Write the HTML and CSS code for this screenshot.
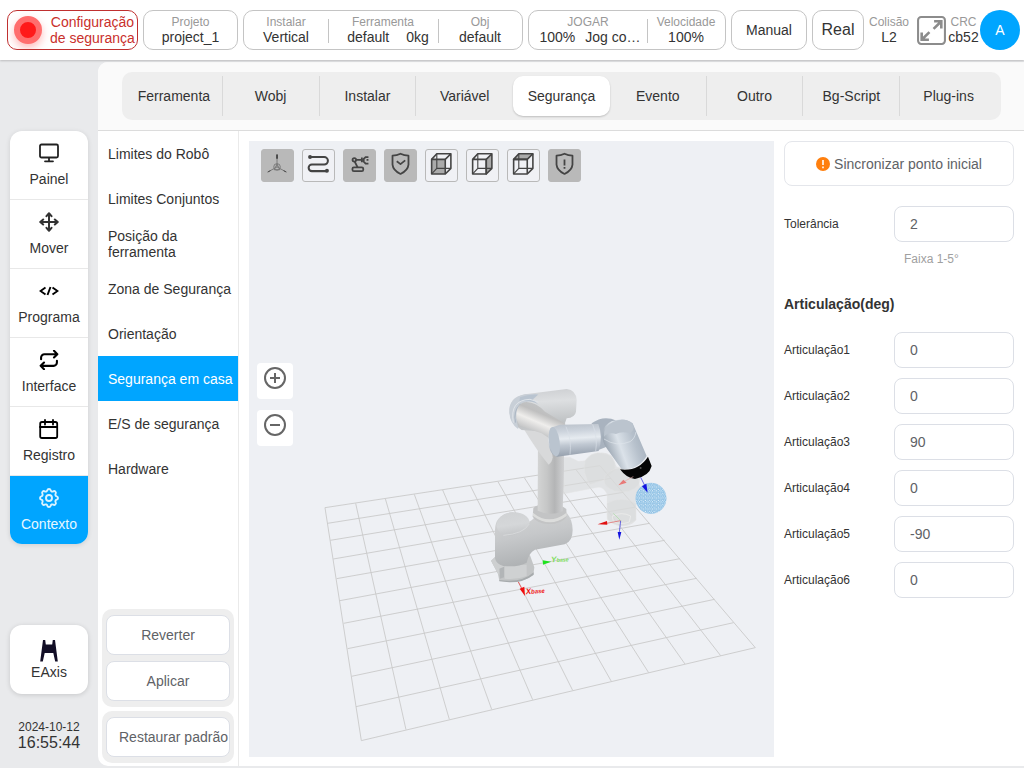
FILE: index.html
```
<!DOCTYPE html>
<html lang="pt">
<head>
    <meta charset="UTF-8">
    <meta name="viewport" content="width=device-width, initial-scale=1.0">
    <title>Segurança em casa</title>
    <link rel="stylesheet" href="styles.css">
</head>
<body>
    <!-- Header -->
    <header>
        <button class="box safety">
            <span class="lamp"></span>
            <span>Configuração<br>de segurança</span>
        </button>
        <div class="box project">
            <div class="cell"><span class="label">Projeto</span><span>project_1</span></div>
        </div>
        <div class="box setup">
            <div class="cell"><span class="label">Instalar</span><span>Vertical</span></div>
            <div class="cell tool"><span class="label">Ferramenta</span><span class="values"><span>default</span><span>0kg</span></span></div>
            <div class="cell"><span class="label">Obj</span><span>default</span></div>
        </div>
        <div class="box jog">
            <div class="cell mode"><span class="label">JOGAR</span><span class="values"><span>100%</span><span>Jog co…</span></span></div>
            <div class="cell"><span class="label">Velocidade</span><span>100%</span></div>
        </div>
        <button class="box manual">Manual</button>
        <button class="box real">Real</button>
        <div class="status">
            <div class="cell collision"><span class="label">Colisão</span><span>L2</span></div>
            <button class="fullscreen" aria-label="Tela cheia">
                <svg viewBox="0 0 30 30" fill="none" stroke="#8c8c8c" stroke-width="2">
                    <rect x="2" y="2" width="26" height="26" rx="3"/>
                    <path d="M17.5 6h7v7M24 6.500l-7 7M12.500 24h-7v-7M6 23.500l7-7" stroke-width="2.500"/>
                </svg>
            </button>
            <div class="cell"><span class="label">CRC</span><span>cb52</span></div>
            <button class="avatar">A</button>
        </div>
    </header>

    <div class="main">
        <!-- Sidebar -->
        <aside>
            <nav class="side-nav">
                <a href="#">
                    <svg viewBox="0 0 20 20" fill="none" stroke="#222" stroke-width="1.800" stroke-linecap="round">
                        <rect x="1" y="1.500" width="18" height="13" rx="1.500"/><path d="M10 15v3M6 18.300h8"/>
                    </svg>
                    Painel
                </a>
                <a href="#">
                    <svg viewBox="0 0 24 24" fill="none" stroke="#333" stroke-width="2.400" stroke-linecap="round" stroke-linejoin="round">
                        <path d="M5 9l-3.500 3L5 15M9 5l3-3.500L15 5M15 19l-3 3.500L9 19M19 9l3.500 3L19 15M2 12h20M12 2v20"/>
                    </svg>
                    Mover
                </a>
                <a href="#">
                    <svg viewBox="0 0 20 20" fill="none" stroke="#000" stroke-width="1.900">
                        <path d="M6.500 6.500L1.500 10l5 3.500M13.500 6.500l5 3.500-5 3.500M11.500 6l-3 8"/>
                    </svg>
                    Programa
                </a>
                <a href="#">
                    <svg viewBox="0 0 24 24" fill="none" stroke="#000" stroke-width="2.500" stroke-linecap="round" stroke-linejoin="round">
                        <path d="M18 1l4 4-4 4M2.500 11V9a4 4 0 0 1 4-4H21M6 23l-4-4 4-4M21.500 13v2a4 4 0 0 1-4 4H3"/>
                    </svg>
                    Interface
                </a>
                <a href="#">
                    <svg viewBox="0 0 20 20" fill="none" stroke="#000" stroke-width="1.800" stroke-linecap="round">
                        <rect x="1.200" y="3" width="17" height="16" rx="1.800"/><path d="M1 8h17M6 1v4.500M14 1v4.500"/>
                    </svg>
                    Registro
                </a>
                <a href="#" class="active">
                    <svg viewBox="2 2 20 20" fill="none" stroke="#d9f3ff" stroke-width="1.900">
                        <path d="M10.325 4.317c.426-1.756 2.924-1.756 3.350 0a1.724 1.724 0 0 0 2.573 1.066c1.543-.94 3.310.826 2.370 2.370a1.724 1.724 0 0 0 1.065 2.572c1.756.426 1.756 2.924 0 3.350a1.724 1.724 0 0 0-1.066 2.573c.94 1.543-.826 3.310-2.370 2.370a1.724 1.724 0 0 0-2.572 1.065c-.426 1.756-2.924 1.756-3.350 0a1.724 1.724 0 0 0-2.573-1.066c-1.543.94-3.310-.826-2.370-2.370a1.724 1.724 0 0 0-1.065-2.572c-1.756-.426-1.756-2.924 0-3.350a1.724 1.724 0 0 0 1.066-2.573c-.94-1.543.826-3.310 2.370-2.370 1 .608 2.296.07 2.572-1.065z"/>
                        <circle cx="12" cy="12" r="3"/>
                    </svg>
                    Contexto
                </a>
            </nav>
            <div class="side-bottom">
                <button class="eaxis">
                    <svg viewBox="0 0 18 22" fill="#120e26">
                        <path d="M3 0h2.200l.6 4.500h6.400L12.800 0H15l2.800 21.500h-2.600L13.300 13H4.700L2.800 21.500H.2z"/>
                    </svg>
                    EAxis
                </button>
                <div class="clock">
                    <div class="date">2024-10-12</div>
                    <div class="time">16:55:44</div>
                </div>
            </div>
        </aside>

        <section class="panel">
            <!-- Tabs -->
            <div class="tabs-wrap">
                <nav class="tabs">
                    <a href="#">Ferramenta</a>
                    <a href="#">Wobj</a>
                    <a href="#">Instalar</a>
                    <a href="#">Variável</a>
                    <a href="#" class="active">Segurança</a>
                    <a href="#">Evento</a>
                    <a href="#">Outro</a>
                    <a href="#">Bg-Script</a>
                    <a href="#">Plug-ins</a>
                </nav>
            </div>

            <div class="content">
                <!-- Submenu -->
                <div class="submenu">
                    <nav>
                        <a href="#">Limites do Robô</a>
                        <a href="#">Limites Conjuntos</a>
                        <a href="#">Posição da ferramenta</a>
                        <a href="#">Zona de Segurança</a>
                        <a href="#">Orientação</a>
                        <a href="#" class="active">Segurança em casa</a>
                        <a href="#">E/S de segurança</a>
                        <a href="#">Hardware</a>
                    </nav>
                    <div class="actions">
                        <div class="action-group">
                            <button>Reverter</button>
                            <button>Aplicar</button>
                        </div>
                        <div class="action-group">
                            <button class="restore">Restaurar padrão</button>
                        </div>
                    </div>
                </div>

                <!-- 3D view -->
                <div class="viewer">
                    <svg class="scene" viewBox="0 0 525 616">
                        <defs>
                            <linearGradient id="tube" x1="0" y1="0" x2="0.1" y2="1">
                                <stop offset="0" stop-color="#b9c0c9"/><stop offset=".25" stop-color="#ccd3dc"/>
                                <stop offset=".48" stop-color="#e6ebf0"/><stop offset=".68" stop-color="#c0c8d2"/><stop offset="1" stop-color="#98a2af"/>
                            </linearGradient>
                            <linearGradient id="wrist" x1="0" y1=".4" x2="1" y2="0">
                                <stop offset="0" stop-color="#9aa5b1"/><stop offset=".3" stop-color="#dbe2e9"/>
                                <stop offset=".6" stop-color="#b7c1cc"/><stop offset="1" stop-color="#98a4b2"/>
                            </linearGradient>
                            <linearGradient id="column" x1="0" y1="0" x2="1" y2="0">
                                <stop offset="0" stop-color="#d3d4d4"/><stop offset=".35" stop-color="#c6c7c7"/>
                                <stop offset=".65" stop-color="#b4b5b6"/><stop offset="1" stop-color="#d0d1d3"/>
                            </linearGradient>
                            <linearGradient id="shell" x1="0" y1="0" x2=".3" y2="1">
                                <stop offset="0" stop-color="#d4d5d6"/><stop offset=".5" stop-color="#c6c8ca"/><stop offset="1" stop-color="#aeb1b3"/>
                            </linearGradient>
                            <linearGradient id="cap" x1="0" y1="0" x2=".2" y2="1">
                                <stop offset="0" stop-color="#d0d2d4"/><stop offset=".6" stop-color="#d5d7d9"/><stop offset="1" stop-color="#c5c7c9"/>
                            </linearGradient>
                            <linearGradient id="elbow" x1=".4" y1="0" x2=".5" y2="1">
                                <stop offset="0" stop-color="#cdcfd2"/><stop offset=".3" stop-color="#dddfe1"/><stop offset=".8" stop-color="#bfc2c4"/><stop offset="1" stop-color="#c8cacc"/>
                            </linearGradient>
                            <linearGradient id="arm" gradientUnits="userSpaceOnUse" x1="212" y1="95" x2="176" y2="180">
                                <stop offset="0" stop-color="#c2c5c7"/><stop offset=".35" stop-color="#bfbfbf"/>
                                <stop offset=".65" stop-color="#efeeec"/><stop offset="1" stop-color="#c3c4c5"/>
                            </linearGradient>
                            <pattern id="mesh" width="13" height="11" patternUnits="userSpaceOnUse">
                                <rect width="13" height="11" fill="#8dc0e4"/>
                                <path d="M1 1l3 1-1 2-2-1zM6 0l3 1-2 2zM4 6l3-1 1 3-3 0zM10 4l3 1-2 3zM0 8l2 0 1 3-3-1zM8 8l3 1-2 2zM10 0h2v2z" fill="#f0f9ff"/>
                            </pattern>
                        </defs>

                        <!-- Floor grid -->
                        <g transform="translate(61 319) scale(.3333)" fill="none" stroke="#c9c9ca" stroke-width="2.700">
                            <path d="M45 143L154 842M137 130L288 809M226 116L418 778M313 103L545 748M398 90L668 719M481 77L788 691M564 65L904 664M643 53L1016 638M722 41L1125 612M798 29L1232 587M870 17L1336 563"/>
                            <path d="M45 143L870 17M53 190L903 55M61 241L940 97M70 297L978 141M80 356L1019 190M90 422L1064 241M101 490L1110 296M113 566L1160 355M125 649L1214 418M138 740L1271 488M154 842L1336 563"/>
                        </g>

                        <!-- Robot -->
                        <g transform="translate(221 229) scale(.3333)">
                            <!-- home position ghost -->
                            <g fill="#d9dadb" fill-opacity=".6" stroke="#e6e7e8" stroke-width="1">
                                <path d="M240 285L262 262H300L325 274L345 272L365 255Q400 240 425 258L440 290L500 310L510 350Q508 370 497 380L498 450Q485 468 455 468Q425 465 412 448L411 372Q400 350 385 352L280 372Q255 366 240 330Z"/>
                                <path d="M240 290Q262 280 278 310Q290 345 278 371Q250 366 240 330Z"/>
                                <path d="M345 272Q365 242 400 250Q438 255 436 300L402 330L360 344Q336 310 345 272Z"/>
                                <ellipse cx="456" cy="330" rx="54" ry="36"/>
                                <path d="M411 400Q455 375 498 400L498 450Q455 485 412 448Z"/>
                            </g>
                            <path d="M427 438Q455 424 482 438L478 456Q452 466 430 455Z" fill="none" stroke="#f0f0ee" stroke-width="2"/>
                            <!-- base -->
                            <path d="M63 572L76 560L180 556L193 592L190 615Q165 636 120 636L88 632L84 612Z" fill="#c3c5c6"/>
                            <path d="M104 588L170 584V618Q140 630 104 626Z" fill="#cfd1d2"/>
                            <path d="M76 560L102 588L98 612L86 614L64 574Z" fill="#cdcfd0"/>
                            <path d="M88 596L102 590V622L90 626Z" fill="#b2b5b7"/>
                            <path d="M88 630Q155 640 191 607V614Q160 638 118 637L88 634Z" fill="#a7abad"/>
                            <!-- shoulder -->
                            <path d="M75 480Q75 435 125 427Q165 426 178 455Q190 450 200 432L290 428Q308 450 308 480Q308 515 284 523L195 539Q176 548 170 578Q145 592 100 588Q78 582 75 565Z" fill="url(#shell)"/>
                            <path d="M79 468Q84 431 126 427Q175 428 179 458Q165 488 122 498Q84 496 79 468Z" fill="url(#cap)"/>
                            <path d="M100 496Q160 492 178 462" fill="none" stroke="#dee0e1" stroke-width="2"/>
                            <!-- column -->
                            <path d="M188 440L190 415Q195 404 230 403Q275 404 289 417L290 440Q275 462 236 462Q200 460 188 440Z" fill="#c3c4c5"/>
                            <path d="M189 428Q236 468 290 428V438Q240 476 189 438Z" fill="#dcdddc"/>
                            <path d="M204 190L282 180L282 300L278 424Q240 440 203 422Z" fill="url(#column)"/>
                            <path d="M160 166L240 196L248 262Q246 278 236 284Q202 245 160 175Z" fill="#d8d9da"/>
                            <!-- upper arm -->
                            <path d="M118 125Q116 82 165 73L290 57Q318 60 320 90L318 125Q315 143 290 145L283 165L225 185L155 180Q120 160 118 125Z" fill="url(#elbow)"/>
                            <path d="M118 128Q116 82 165 73L205 72L186 92Q135 98 140 150L145 178Q120 160 118 128Z" fill="#c8cfd7"/>
                            <path d="M150 82Q175 72 204 74L188 88L206 104Q185 90 148 94Z" fill="#b9c4d0"/>
                            <path d="M130 158Q118 90 180 88L205 96" fill="none" stroke="#dfe4e9" stroke-width="3"/>
                            <path d="M137 158Q128 126 152 102" fill="none" stroke="#aeb9c5" stroke-width="4"/>
                            <path d="M139 135Q140 98 170 96Q198 97 225 125L287 162L240 206L215 190L150 168Q138 150 139 135Z" fill="url(#arm)"/>
                            <!-- forearm -->
                            <path d="M365 160Q400 134 440 152L410 230L380 242Z" fill="#a9b3bf"/>
                            <path d="M242 173L270 164L385 162Q400 200 386 243L262 260Q244 258 237 230Q232 195 242 173Z" fill="url(#tube)"/>
                            <ellipse cx="253" cy="215" rx="16" ry="44" transform="rotate(-8 253 215)" fill="#bac4cf"/>
                            <path d="M288 170Q306 210 300 254M368 163Q384 205 377 244" fill="none" stroke="#dae0e7" stroke-width="2"/>
                            <!-- wrist -->
                            <path d="M398 190Q400 165 425 154Q465 140 488 160L530 258Q505 300 455 298L412 238Q394 215 398 190Z" fill="url(#wrist)"/>
                            <path d="M402 200Q400 168 430 155Q470 140 488 163Q497 180 480 190Q455 182 438 192Q415 185 402 200Z" fill="#bbc4ce"/>
                            <path d="M402 207Q440 232 480 215Q494 207 498 186" fill="none" stroke="#dfe5eb" stroke-width="2"/>
                            <path d="M450 298Q505 305 534 260L545 288Q538 318 495 327Q470 325 450 298Z" fill="#050505"/>
                            <circle cx="512" cy="294" r="3" fill="#555"/>
                            <!-- safety sphere -->
                            <circle cx="543" cy="385" r="46" fill="url(#mesh)" stroke="#8dc0e4" stroke-width="1"/>
                            <!-- axes -->
                            <g stroke-width="2">
                                <path d="M512 322L526 350" stroke="#22d"/><path d="M516 349L529 341L533 368Z" fill="#1212e0"/>
                                <path d="M452 340L490 320" stroke="#e3aaa8"/><path d="M445 346L460 329L470 338Z" fill="#e87a78"/>
                                <path d="M452 452L448 487" stroke="#22d"/><path d="M443 486H454L448 509Z" fill="#1212e0"/>
                                <path d="M452 452L410 460" stroke="#e35a5a"/><path d="M383 463L411 453L412 464Z" fill="#e01212"/>
                                <path d="M430 430L452 452" stroke="#a9dca5"/>
                                <path d="M145 636L155 655" stroke="#e22"/><path d="M149 656L163 650L165 678Z" fill="#f00d0d"/>
                                <path d="M218 571L244 575L219 584Z" fill="#1ee21e"/>
                            </g>
                            <text class="axis" x="168" y="673" fill="#ee1515" transform="rotate(-5 168 673)">X<tspan font-size="18">base</tspan></text>
                            <text class="axis" x="244" y="577" fill="#7ddd5a" transform="rotate(-3 244 577)">Y<tspan font-size="16">base</tspan></text>
                        </g>
                    </svg>

                    <div class="toolbar">
                        <button class="on" aria-label="Eixos">
                            <svg viewBox="0 0 33 33" fill="none" stroke="#777" stroke-width="1">
                                <circle cx="16" cy="18" r="3.500"/><path d="M16 18V7M16 18l-9 5M16 18l9 5M13 21h6l-3-6z"/><path d="M15.500 5h1v4h-1zM6 23.500l3-1.500M23 22l3 1.500" stroke="#444"/>
                            </svg>
                        </button>
                        <button aria-label="Trajetória">
                            <svg viewBox="0 0 33 33" fill="none" stroke="#444" stroke-width="2.200">
                                <path d="M8 7.500h14.500a4 4 0 0 1 0 8H9.500a3.500 3.500 0 0 0 0 7H25"/><circle cx="7.500" cy="7.500" r="1"/><circle cx="25.500" cy="22" r="1"/>
                            </svg>
                        </button>
                        <button class="on" aria-label="Robô">
                            <svg viewBox="0 0 33 33" fill="none" stroke="#444" stroke-width="1.900">
                                <rect x="9" y="18.500" width="11.500" height="4" rx="1.500"/><circle cx="11" cy="10.500" r="1.900"/><path d="M11.500 12.500l3 6M13 10.500h7M26 7.500h-3l-2 2v3l2 2h3M19 8v5M24 10.500h2"/>
                            </svg>
                        </button>
                        <button class="on" aria-label="Zona segura">
                            <svg viewBox="0 0 33 33" fill="none" stroke="#444" stroke-width="1.900" stroke-linejoin="round">
                                <path d="M16.500 4Q20.500 6 25 6V15.500Q24.500 21.500 16.500 25.500Q8.500 21.500 8 15.500V6Q12.500 6 16.500 4z"/><path d="M12.500 12l4 3 5-4"/>
                            </svg>
                        </button>
                        <button aria-label="Vista frontal">
                            <svg viewBox="0 0 33 33" fill="none" stroke="#444" stroke-width="1.700" stroke-linejoin="round">
                                <path d="M6 10h14.500v15.500H6z" fill="#aaa"/><path d="M6 10l5.500-6h15v15.500l-6 6M20.500 10l6-6"/><path d="M11.500 4v15.500h15M11.500 19.500l-5.500 6" stroke-width="1.200"/>
                            </svg>
                        </button>
                        <button aria-label="Vista lateral">
                            <svg viewBox="0 0 33 33" fill="none" stroke="#444" stroke-width="1.700" stroke-linejoin="round">
                                <path d="M20.500 10l6-6v15.500l-6 6z" fill="#aaa"/><path d="M6 10h14.500v15.500H6zM6 10l5.500-6h15"/><path d="M11.500 4v15.500h15M11.500 19.500l-5.500 6" stroke-width="1.200"/>
                            </svg>
                        </button>
                        <button aria-label="Vista superior">
                            <svg viewBox="0 0 33 33" fill="none" stroke="#444" stroke-width="1.700" stroke-linejoin="round">
                                <path d="M6 10l5.500-6h15l-6 6z" fill="#aaa"/><path d="M6 10h14.500v15.500H6zM26.500 4v15.500l-6 6"/><path d="M11.500 4v15.500h15M11.500 19.500l-5.500 6" stroke-width="1.200"/>
                            </svg>
                        </button>
                        <button class="on" aria-label="Alerta de segurança">
                            <svg viewBox="0 0 33 33" fill="none" stroke="#444" stroke-width="1.900" stroke-linejoin="round">
                                <path d="M16.500 4Q20.500 6 25 6V15.500Q24.500 21.500 16.500 25.500Q8.500 21.500 8 15.500V6Q12.500 6 16.500 4z"/><path d="M16.500 10v6.500M16.500 18v2"/>
                            </svg>
                        </button>
                    </div>

                    <div class="zoom">
                        <button aria-label="Aumentar">
                            <svg viewBox="0 0 22 22" fill="none" stroke="#666" stroke-width="2"><circle cx="11" cy="11" r="10"/><path d="M6 11h10M11 6v10"/></svg>
                        </button>
                        <button aria-label="Diminuir">
                            <svg viewBox="0 0 22 22" fill="none" stroke="#666" stroke-width="2"><circle cx="11" cy="11" r="10"/><path d="M6 11h10"/></svg>
                        </button>
                    </div>
                </div>

                <!-- Home position form -->
                <form class="home-form">
                    <button type="button" class="sync">
                        <svg viewBox="0 0 14 14"><circle cx="7" cy="7" r="7" fill="#ff7f0e"/><path d="M7 3v5M7 9.500v1.700" stroke="#fff" stroke-width="1.600"/></svg>
                        Sincronizar ponto inicial
                    </button>
                    <div class="field">
                        <label for="tol">Tolerância</label>
                        <input id="tol" type="text" value="2">
                    </div>
                    <p class="hint">Faixa 1-5°</p>
                    <h2>Articulação(deg)</h2>
                    <div class="joints">
                        <div class="field"><label for="j1">Articulação1</label><input id="j1" type="text" value="0"></div>
                        <div class="field"><label for="j2">Articulação2</label><input id="j2" type="text" value="0"></div>
                        <div class="field"><label for="j3">Articulação3</label><input id="j3" type="text" value="90"></div>
                        <div class="field"><label for="j4">Articulação4</label><input id="j4" type="text" value="0"></div>
                        <div class="field"><label for="j5">Articulação5</label><input id="j5" type="text" value="-90"></div>
                        <div class="field"><label for="j6">Articulação6</label><input id="j6" type="text" value="0"></div>
                    </div>
                </form>
            </div>
        </section>
    </div>
</body>
</html>
```
FILE: styles.css
```
* {
    box-sizing: border-box;
    margin: 0;
    padding: 0;
}
body {
    font-family: "Liberation Sans", Arial, sans-serif;
    font-size: 14px;
    line-height: 16px;
    color: #333;
    background: #e9eaec;
    min-height: 100vh;
    display: flex;
    flex-direction: column;
}
a {
    color: inherit;
    text-decoration: none;
}
button {
    font: inherit;
    color: inherit;
    background: #fff;
    border: none;
    cursor: pointer;
}
svg {
    display: block;
}

/* Header */
header {
    display: flex;
    align-items: center;
    gap: 5px;
    height: 60px;
    padding: 0 4px 0 7px;
    background: #fff;
    box-shadow: 0 1px 2px rgba(0, 0, 0, 0.2);
    z-index: 1;
}
.box {
    display: flex;
    align-items: center;
    justify-content: center;
    height: 40px;
    border: 1px solid #c4c4c4;
    border-radius: 10px;
    white-space: nowrap;
}
.safety {
    flex: 1 0 131px;
    justify-content: flex-start;
    gap: 8px;
    padding-left: 6px;
    color: #c9302c;
    border-color: #c03030;
    overflow: hidden;
}
.lamp {
    width: 28px;
    height: 28px;
    border: 6px solid #ff6e6e;
    border-radius: 50%;
    background: #ff1a1a;
    box-shadow: 0 4px 8px rgba(255, 60, 60, 0.35);
}
.project {
    flex: 1 0 95px;
}
.setup {
    flex: 1 0 280px;
}
.jog {
    flex: 1 0 198px;
}
.manual {
    flex: 1 0 76px;
}
.real {
    flex: 1 0 52px;
    font-size: 16px;
}
.cell {
    flex: 1;
    display: flex;
    flex-direction: column;
    align-items: center;
}
.cell + .cell {
    position: relative;
}
.box .cell + .cell::before {
    content: "";
    position: absolute;
    left: 0;
    top: 4px;
    height: 24px;
    border-left: 1px solid #c4c4c4;
}
.label {
    font-size: 12px;
    line-height: 14px;
    color: #999;
}
.tool {
    flex: 0 0 110px;
}
.tool .values {
    padding-left: 10px;
    gap: 17px;
}
.mode {
    flex: 0 0 118px;
}
.values {
    display: flex;
    gap: 10px;
    padding-left: 4px;
}
.status {
    display: flex;
    align-items: center;
    gap: 1px;
    flex: 0 0 151px;
}
.collision {
    flex: 0 0 40px;
    margin-right: 6px;
}
.fullscreen {
    width: 31px;
    height: 30px;
}
.avatar {
    width: 40px;
    height: 40px;
    border-radius: 50%;
    background: #00a5ff;
    color: #fff;
}

/* Sidebar */
.main {
    flex: 1;
    display: flex;
    padding-top: 2px;
}
aside {
    width: 98px;
    padding: 69px 10px 17px;
    display: flex;
    flex-direction: column;
    justify-content: space-between;
}
.side-nav {
    border-radius: 12px;
    background: #fff;
    overflow: hidden;
    box-shadow: 0 1px 5px rgba(0, 0, 0, 0.12);
}
.side-nav a {
    display: flex;
    flex-direction: column;
    align-items: center;
    gap: 8px;
    height: 69px;
    padding-top: 12px;
    border-bottom: 1px solid #e8e8e8;
}
.side-nav svg {
    width: 20px;
    height: 20px;
}
.side-nav .active {
    height: 68px;
    background: #00a5ff;
    color: #e6f7ff;
    border-bottom: none;
}
.eaxis {
    width: 100%;
    height: 69px;
    border-radius: 12px;
    display: flex;
    flex-direction: column;
    align-items: center;
    justify-content: center;
    gap: 2px;
    box-shadow: 0 1px 5px rgba(0, 0, 0, 0.15);
}
.eaxis svg {
    width: 18px;
    height: 22px;
}
.clock {
    margin-top: 25px;
    text-align: center;
}
.date {
    font-size: 12px;
}
.time {
    font-size: 16px;
}

/* Panel */
.panel {
    flex: 1;
    display: flex;
    flex-direction: column;
    margin-bottom: 2px;
    background: #fff;
    border-radius: 10px 0 0 10px;
    overflow: hidden;
}
.tabs-wrap {
    padding: 10px 23px 10px 24px;
    background: #fafafa;
    border-bottom: 1px solid #dcdcdc;
}
.tabs {
    display: grid;
    grid-template-columns: repeat(9, 1fr);
    height: 48px;
    padding: 4px;
    background: #eee;
    border-radius: 10px;
}
.tabs a {
    display: flex;
    align-items: center;
    justify-content: center;
    border-right: 1px solid #d9d9d9;
}
.tabs a:nth-child(4),
.tabs a:last-child {
    border-right: none;
}
.tabs .active {
    background: #fff;
    border-right: none;
    border-radius: 10px;
    box-shadow: 0 1px 2px rgba(0, 0, 0, 0.2);
}
.content {
    flex: 1;
    display: flex;
}

/* Submenu */
.submenu {
    width: 141px;
    border-right: 1px solid #eaeaea;
    display: flex;
    flex-direction: column;
    justify-content: space-between;
}
.submenu a {
    display: flex;
    align-items: center;
    height: 45px;
    padding: 0 4px 0 10px;
}
.submenu .active {
    background: #00a5ff;
    color: #fff;
}
.actions {
    padding: 0 4px 3px;
}
.action-group {
    display: grid;
    gap: 6px;
    padding: 6px 4px;
    background: #eee;
    border-radius: 10px;
}
.action-group + .action-group {
    margin-top: 4px;
}
.action-group button {
    height: 40px;
    border: 1px solid #dcdfe6;
    border-radius: 8px;
    color: #606266;
    white-space: nowrap;
}
.action-group .restore {
    padding-left: 12px;
    text-align: left;
}

/* 3D view */
.viewer {
    position: relative;
    flex: 1;
    margin: 10px;
    margin-bottom: 9px;
    background: #eef0f4;
}
.scene {
    width: 100%;
    height: 100%;
}
.axis {
    font-size: 24px;
    font-weight: bold;
    font-style: italic;
}
.toolbar {
    position: absolute;
    top: 8px;
    left: 12px;
    display: flex;
    gap: 8px;
}
.toolbar button {
    width: 33px;
    height: 33px;
    border: 1px solid #b9b9b9;
    border-radius: 3px;
    background: #f0f1f5;
}
.toolbar .on {
    background: #b9b9b9;
}
.zoom {
    position: absolute;
    top: 222px;
    left: 8px;
    display: grid;
    gap: 11px;
}
.zoom button {
    width: 36px;
    height: 36px;
    padding: 4px 7px 10px;
    border-radius: 4px;
}

/* Home position form */
.home-form {
    width: 240px;
    padding: 10px 10px 0 0;
}
.sync {
    display: flex;
    align-items: center;
    justify-content: center;
    gap: 4px;
    width: 100%;
    height: 45px;
    margin-bottom: 20px;
    border: 1px solid #e4e6eb;
    border-radius: 8px;
    color: #606266;
}
.sync svg {
    width: 14px;
    height: 14px;
}
.field {
    display: flex;
    align-items: center;
    justify-content: space-between;
    font-size: 12px;
}
.field input {
    width: 120px;
    height: 36px;
    padding: 0 15px;
    border: 1px solid #dcdfe6;
    border-radius: 8px;
    font: inherit;
    font-size: 14px;
    color: #606266;
}
.hint {
    margin: 9px 0 0 120px;
    font-size: 12px;
    color: #a0a0a0;
}
.home-form h2 {
    margin: 29px 0 20px;
    font-size: 14px;
}
.joints {
    display: grid;
    gap: 10px;
}
```
